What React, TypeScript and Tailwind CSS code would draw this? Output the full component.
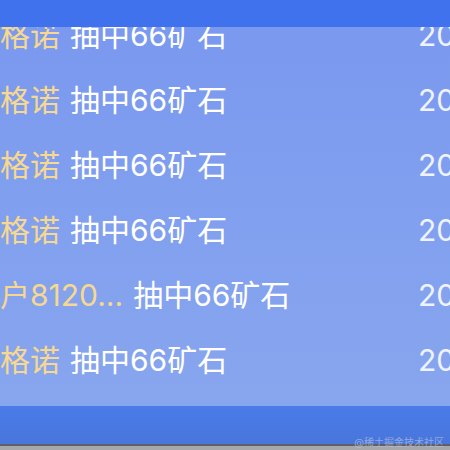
import React from "react";

type Record = {
  name: string;
  prize: string;
  date: string;
};

const records: Record[] = [
  { name: "普格诺", prize: "抽中66矿石", date: "2023-08-12 10:21" },
  { name: "普格诺", prize: "抽中66矿石", date: "2023-08-12 10:20" },
  { name: "普格诺", prize: "抽中66矿石", date: "2023-08-12 10:18" },
  { name: "普格诺", prize: "抽中66矿石", date: "2023-08-12 10:16" },
  { name: "用户8120...", prize: "抽中66矿石", date: "2023-08-12 10:15" },
  { name: "普格诺", prize: "抽中66矿石", date: "2023-08-12 10:11" },
];

export default function App() {
  return (
    <div
      className="relative flex h-[450px] w-[450px] flex-col overflow-hidden"
      style={{ fontFamily: 'Inter, "Noto Sans CJK SC", sans-serif' }}
    >
      <div className="relative z-10 h-[27px] shrink-0 bg-[#4172ee]" />

      <div className="min-h-0 flex-1 overflow-hidden bg-gradient-to-b from-[#7a99ef] to-[#88a6ee]">
        <div className="-mt-[25px]">
          {records.map((item, index) => (
            <div
              key={index}
              className="-ml-[30px] grid h-[65px] grid-cols-[448px_auto] items-center whitespace-nowrap text-[30px] leading-none"
            >
              <div className="flex items-center gap-[10px]">
                <span className="text-[#f6d88f]">{item.name}</span>
                <span className="text-white">{item.prize}</span>
              </div>
              <span className="text-[#eef3ff]">{item.date}</span>
            </div>
          ))}
        </div>
      </div>

      <div className="h-[38px] shrink-0 bg-gradient-to-b from-[#4a7be9] to-[#4876dc]" />
      <div className="h-[2px] shrink-0 bg-[#5e6068]" />
      <div className="h-[4px] shrink-0 bg-[#a6a7aa]" />

      <div className="absolute bottom-[3px] right-[6px] text-[10px] leading-none text-[#b7c0dc]/70">
        @稀土掘金技术社区
      </div>
    </div>
  );
}
